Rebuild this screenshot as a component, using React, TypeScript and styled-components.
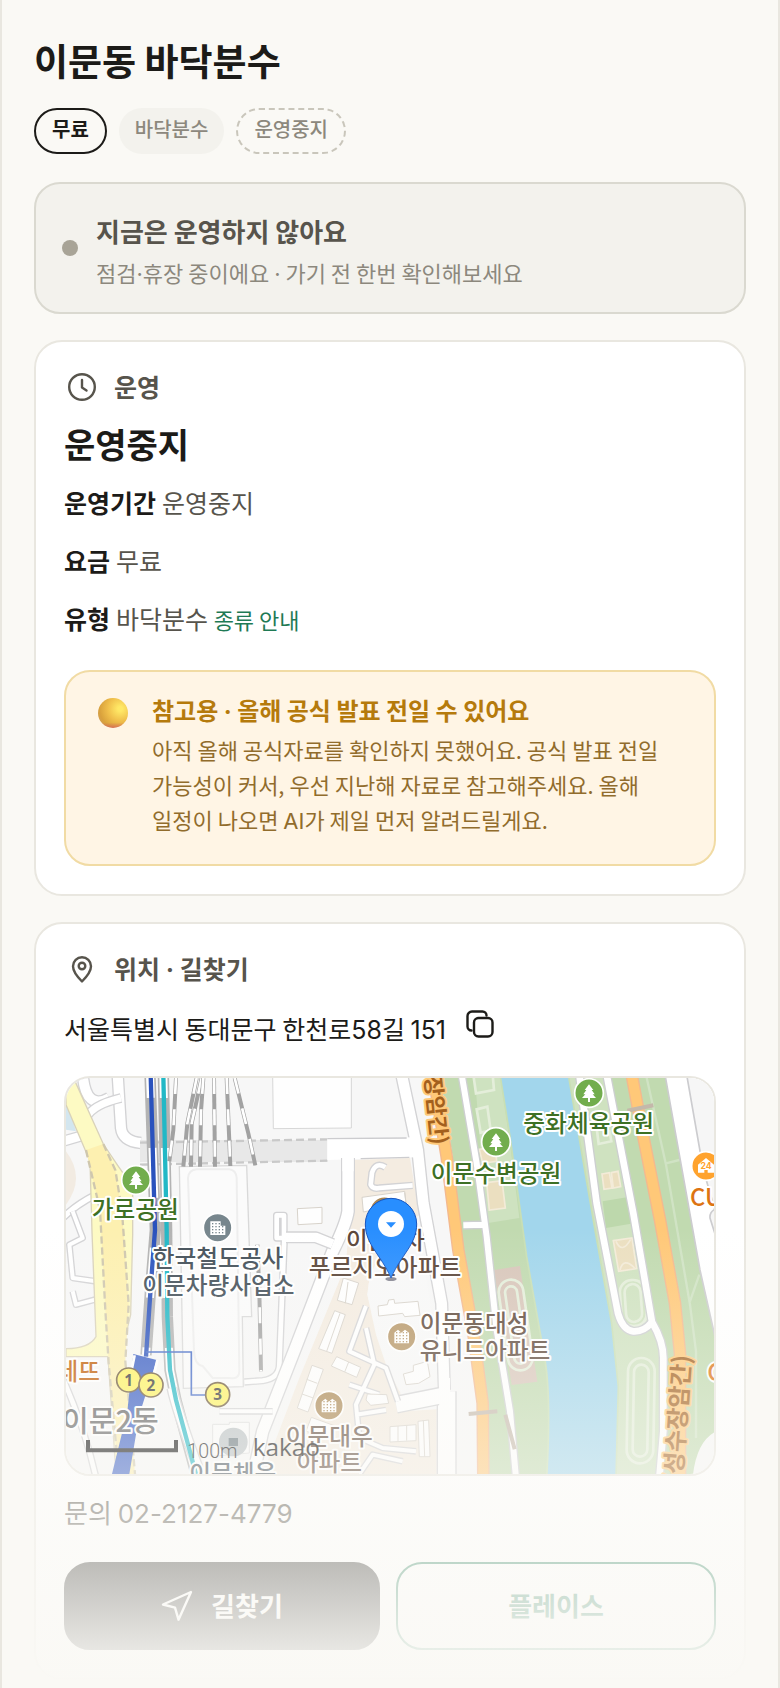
import React from 'react';
import styled, { createGlobalStyle, css } from 'styled-components';

const color = {
  page: '#faf9f5',
  card: '#ffffff',
  ink: '#1c1b18',
  soft: '#57544c',
  muted: '#8c887d',
  line: '#e9e7e0',
  fill: '#f3f2ed',
  green: '#1f7a55',
};

const GlobalStyle = createGlobalStyle`
  *, *::before, *::after { box-sizing: border-box; }
  body {
    margin: 0;
    background: ${color.page};
    color: ${color.ink};
    font-family: "Noto Sans CJK KR", Inter, sans-serif;
    word-break: keep-all;
  }
  h1, h2, p, dl, dd { margin: 0; }
  button { font: inherit; cursor: pointer; }
`;

const Page = styled.main`
  position: relative;
  min-height: 100vh;
  padding: 32px 32px 8px;
  border: solid ${color.line};
  border-width: 0 2px;
  overflow: hidden;
`;

const Latin = styled.span`
  font-family: Inter, sans-serif;
  line-height: 1;
`;

const PageTitle = styled.h1`
  font-size: 37px;
  font-weight: 700;
  line-height: 56px;
`;

const Chips = styled.ul`
  display: flex;
  gap: 12px;
  margin: 20px 0 28px;
  padding: 0;
  list-style: none;
`;

type ChipKind = 'outline' | 'filled' | 'dashed';

const chipLook = {
  outline: css`
    padding: 4px 16px;
    border: 2px solid ${color.ink};
    color: ${color.ink};
    font-weight: 700;
  `,
  filled: css`
    padding: 6px 16px;
    background: ${color.fill};
    color: ${color.muted};
    font-weight: 500;
  `,
  dashed: css`
    padding: 4px 16px;
    border: 2px dashed #c9c6bb;
    color: ${color.muted};
    font-weight: 500;
  `,
};

const Chip = styled.li<{ $kind: ChipKind }>`
  height: 46px;
  border-radius: 23px;
  font-size: 20px;
  line-height: 30px;
  ${({ $kind }) => chipLook[$kind]}
`;

const Status = styled.section`
  display: flex;
  align-items: center;
  gap: 18px;
  height: 132px;
  margin-bottom: 26px;
  padding: 0 26px;
  border: 2px solid #dad9d0;
  border-radius: 26px;
  background: ${color.fill};
`;

const StatusBody = styled.div`
  padding-top: 6px;
`;

const Dot = styled.span`
  flex: none;
  width: 16px;
  height: 16px;
  border-radius: 50%;
  background: #a8a497;
`;

const StatusTitle = styled.h2`
  color: ${color.soft};
  font-size: 26px;
  font-weight: 700;
  line-height: 42px;
`;

const StatusText = styled.p`
  color: ${color.muted};
  font-size: 22px;
  line-height: 40px;
`;

const Card = styled.section`
  padding: 26px 28px 28px;
  border: 2px solid ${color.line};
  border-radius: 28px;
  background: ${color.card};

  & + & { margin-top: 26px; }
`;

const CardHeader = styled.h2`
  display: flex;
  align-items: center;
  gap: 14px;
  margin-bottom: 18px;
  color: ${color.soft};
  font-size: 25px;
  font-weight: 700;
  line-height: 36px;

  svg { margin: 2px 1px 0; }
`;

const Hours = styled.p`
  font-size: 34px;
  font-weight: 700;
  line-height: 44px;
`;

const Facts = styled.dl`
  display: grid;
  gap: 18px;
  margin: 16px 0 32px;
`;

const Fact = styled.div`
  display: flex;
  align-items: baseline;
  gap: 6px;
  font-size: 25px;
  line-height: 40px;

  dt { font-weight: 700; }
  dd { color: ${color.soft}; }
`;

const TextLink = styled.a`
  color: ${color.green};
  font-size: 22px;
  line-height: 1;
  text-decoration: none;
`;

const Notice = styled.aside`
  display: flex;
  gap: 24px;
  padding: 22px 31px 27px;
  border: 2px solid #f1dba4;
  border-radius: 26px;
  background: #fff5e5;
`;

const Orb = styled.span`
  flex: none;
  width: 30px;
  height: 30px;
  margin: 4px 0 0 1px;
  border-radius: 50%;
  background:
    linear-gradient(transparent 82%, rgba(214, 92, 96, 0.7)),
    radial-gradient(circle at 74% 36%, #ffe866 8%, #f0bf4b 42%, #d9a13c 70%, #c59a72 100%);
`;

const NoticeTitle = styled.h2`
  color: #b57a0c;
  font-size: 24px;
  font-weight: 700;
  line-height: 32px;
`;

const NoticeText = styled.p`
  margin-top: 6px;
  color: #916c2c;
  font-size: 22px;
  line-height: 35px;
`;

const Address = styled.div`
  display: flex;
  align-items: center;
  gap: 16px;
  font-size: 25px;
  line-height: 48px;
`;

const CopyButton = styled.button`
  display: grid;
  place-items: center;
  width: 36px;
  height: 48px;
  padding: 0 0 8px;
  border: 0;
  background: none;
  color: ${color.ink};
`;

const MapFrame = styled.div`
  height: 400px;
  margin-top: 24px;
  border: 2px solid ${color.line};
  border-radius: 26px;
  overflow: hidden;

  svg {
    display: block;
    width: 100%;
    height: 100%;
  }
`;

const Phone = styled.p`
  margin: 16px 0 30px;
  color: ${color.soft};
  font-size: 26px;
  line-height: 40px;
`;

const Actions = styled.div`
  display: grid;
  grid-template-columns: 316fr 320fr;
  gap: 16px;
`;

const ActionButton = styled.button<{ $primary?: boolean }>`
  display: flex;
  align-items: center;
  justify-content: center;
  gap: 18px;
  height: 88px;
  padding: 0 0 4px;
  border: 2px solid ${({ $primary }) => ($primary ? color.ink : color.green)};
  border-radius: 26px;
  background: ${({ $primary }) => ($primary ? color.ink : color.card)};
  color: ${({ $primary }) => ($primary ? '#ffffff' : color.green)};
  font-size: 26px;
  font-weight: 700;

  svg { margin-top: 4px; }
`;

const BottomFade = styled.div`
  position: absolute;
  inset: auto -2px 0;
  height: 460px;
  background: linear-gradient(rgba(250, 249, 245, 0), ${color.page});
  pointer-events: none;
`;

const MapLabel = styled.text<{ $tone: string; $halo?: string; $size?: number; $bold?: boolean }>`
  fill: ${({ $tone }) => $tone};
  stroke: ${({ $halo = '#ffffff' }) => $halo};
  stroke-width: 12px;
  stroke-linejoin: round;
  paint-order: stroke;
  font-family: "Noto Sans CJK KR", sans-serif;
  font-size: ${({ $size = 71 }) => $size}px;
  font-weight: ${({ $bold }) => ($bold ? 700 : 500)};
`;

const stroke = {
  fill: 'none',
  stroke: 'currentColor',
  strokeLinecap: 'round' as const,
  strokeLinejoin: 'round' as const,
};

const ClockIcon = () => (
  <svg width="34" height="34" viewBox="0 0 34 34" strokeWidth="2.4" {...stroke}>
    <circle cx="17" cy="17" r="12.8" />
    <path d="M17 10v7.5l4.5 3" />
  </svg>
);

const PinIcon = () => (
  <svg width="34" height="34" viewBox="0 0 34 34" strokeWidth="2.4" {...stroke}>
    <path d="M17 29.5c-3.2-3.2-9-9-9-15.2a9 9 0 0 1 18 0c0 6.2-5.8 12-9 15.2z" />
    <circle cx="17" cy="14" r="3.3" />
  </svg>
);

const CopyIcon = () => (
  <svg width="28" height="28" viewBox="0 0 28 28" strokeWidth="2.4" {...stroke}>
    <rect x="8" y="8" width="18.5" height="18.5" rx="4.5" />
    <path d="M5.5 20.5A4 4 0 0 1 1.5 16.5V6a4.5 4.5 0 0 1 4.5-4.5h10.5a4 4 0 0 1 4 4" />
  </svg>
);

const SendIcon = () => (
  <svg width="32" height="32" viewBox="0 0 32 32" strokeWidth="2.4" {...stroke}>
    <path d="M30 2 2 14.5l12 3.2 3.5 12z" />
  </svg>
);

const Road = ({ d, width, casing = '#d3d3d5', fill = '#ffffff' }: { d: string; width: number; casing?: string; fill?: string }) => (
  <g fill="none" strokeLinejoin="round">
    <path d={d} stroke={casing} strokeWidth={width + 8} />
    <path d={d} stroke={fill} strokeWidth={width} />
  </g>
);

const ParkMarker = ({ x, y }: { x: number; y: number }) => (
  <g transform={`translate(${x} ${y})`}>
    <circle r="43" fill="#72ad4d" stroke="#ffffff" strokeWidth="5" />
    <path d="M0-26 13-9H8L17 4H11L21 15H3V27H-3V15H-21L-11 4H-17L-8-9H-13z" fill="#ffffff" />
  </g>
);

const windows = [-12, -3, 6, 15].flatMap((y) => [-14, -4, 6, 16].map((x) => ({ x: x - 3, y: y - 2 })));

const BuildingMarker = ({ x, y, fill, office }: { x: number; y: number; fill: string; office?: boolean }) => (
  <g transform={`translate(${x} ${y})`}>
    <circle r="43" fill={fill} stroke="#ffffff" strokeWidth="5" />
    <path d={office ? 'M-22-19H9V-6H23V22H-22z' : 'M-22 20V-12L-11-21-1-12V-12L10-21 22-12V20z'} fill="#ffffff" />
    {windows.filter((w) => !office || w.x < 8 || w.y > -8).map((w) => (
      <rect key={`${w.x},${w.y}`} x={w.x} y={w.y} width="4" height="4" fill={fill} />
    ))}
  </g>
);

const ExitBadge = ({ x, y, n }: { x: number; y: number; n: number }) => (
  <g transform={`translate(${x} ${y})`}>
    <circle r="36" fill="#fef35f" stroke="#6b5636" strokeWidth="5" />
    <text y="17" textAnchor="middle" fontFamily="Noto Sans" fontSize="46" fontWeight="700" fill="#333333">{n}</text>
  </g>
);

const sidings = [
  'M330 0 322 156 310 250', 'M392 0 364 136 352 266', 'M407 0 377 136 375 266', 'M412 0 405 100 402 266',
  'M444 0 447 266', 'M482 0 493 264', 'M506 0 547 166 568 262', 'M574 500 580 640 585 880',
];

const houses = [
  'M832 600 878 615 858 680 814 667z', 'M806 698 838 710 798 826 758 812z', 'M812 836 884 868 872 898 796 864z',
  'M738 862 772 874 726 1002 694 990z', 'M888 358 1016 340 1020 376 940 392 892 402z', 'M694 392 768 388 768 436 696 440z',
  'M936 684 964 680 968 666 984 664 986 676 1056 670 1062 712 1016 716 1010 706 938 714z',
  'M1012 888 1042 880 1042 862 1084 850 1092 896 1058 916 1020 920z', 'M904 948 962 950 968 976 914 982 900 966z',
  'M1056 1030 1088 1026 1092 1136 1060 1136z', 'M972 1046 1050 1040 1050 1088 972 1092z', 'M736 1018 808 1044 794 1080 720 1060z',
  'M846 612 838 676M822 706 782 820M848 852 836 882M1016 344 1020 376M754 916 722 904M742 960 708 948M1072 1026 1076 1136M996 1044V1090M1022 1042V1088',
];

const Map = () => (
  <svg viewBox="0 0 1944 1188" preserveAspectRatio="xMidYMid slice" role="img" aria-label="지도">
    <rect width="1944" height="1188" fill="#f7f7f7" />
    <path d="M0 60 30 160 0 155z" fill="#d3e6ef" />
    <path d="M0 220Q60 300 0 380z" fill="#f2ebe2" />

    <Road d="M50-10Q60 100 130 60" width={30} />
    <Road d="M155-10 165 150Q170 190 225 195" width={30} />
    <Road d="M165 60Q80 80 60 120" width={22} />
    <Road d="M-10 190 60 170" width={26} />
    <Road d="M90 350Q30 380-10 420" width={16} />
    <Road d="M20 400 50 480 10 500 20 600 90 610" width={12} />
    <Road d="M20 640 30 680 90 664" width={12} />
    <Road d="M-10 900Q60 1060 90 1200" width={14} />
    <path d="M0 10 28 12 112 198 155 262 200 326 200 470 194 710 165 830 170 1188H150L126 836H0V812Q70 812 90 776L78 462 72 250 0 80z" fill="#fdfac3" stroke="#d9d2ba" strokeWidth="4" />
    <path d="M60 216 112 198 148 276 168 400 188 680 178 850 207 1188H158L128 856 118 696 102 396z" fill="#fdf0b0" />
    <path d="M60 216 102 396 118 696 128 856 158 1188M112 198 148 276 168 400 188 680 178 850 207 1188" fill="none" stroke="#cfc7ae" strokeWidth="7" strokeDasharray="22 11" />

    <rect x="222" y="186" width="562" height="66" fill="#e8e8e8" />
    <path d="M222 194 784 184M222 260 784 248" stroke="#c9c9c9" strokeWidth="7" strokeDasharray="24 12" />
    <path d="M620-10H856V150L622 152z" fill="#fefefe" stroke="#d7d7d7" strokeWidth="3" />
    <path d="M340 266 542 262 557 716 529 716 532 926 352 931z" fill="#fbfbfb" stroke="#d9d9d9" strokeWidth="4" />
    <path d="M366 300Q368 276 392 274H490Q510 276 512 300L520 880Q520 905 490 900L440 900 410 864Q386 860 384 820z" fill="none" stroke="#eeeeee" strokeWidth="6" />
    <Road d="M730 476H654V412H632V476V480H655L640 860Q640 900 590 908L535 912" width={14} />

    <g fill="none">
      <path d="M252-10 268 456 255 616 240 831M292-10 302 456 304 716 312 876 330 966 390 1188" stroke="#b3b3b3" strokeWidth="34" />
      <path d="M252-10 268 456 255 616 240 831M292-10 302 456 304 716 312 876 330 966 390 1188" stroke="#ffffff" strokeWidth="24" strokeDasharray="150 150" strokeDashoffset="80" />
    </g>
    <Road d="M318 930Q330 990 400 1180" width={26} />
    {sidings.map((d) => (
      <g key={d} fill="none">
        <path d={d} stroke="#a2a2a2" strokeWidth="12" />
        <path d={d} stroke="#ffffff" strokeWidth="8" strokeDasharray="48 46" />
      </g>
    ))}
    <path d="M292-10 302 456 304 716 312 876 330 966 390 1188" fill="none" stroke="#22b8c6" strokeWidth="13" />
    <path d="M254-10 267 456 255 616 240 836" fill="none" stroke="#2a52bd" strokeWidth="13" />
    <path d="M202 828 272 846 220 1010 190 1188H138L184 1000z" fill="#375cc4" />
    <path d="M206 832 190 910M274 846 262 900" stroke="#ffffff" strokeWidth="8" />
    <path d="M240 822H376V951H425" fill="none" stroke="#3f67c6" strokeWidth="5" />

    <path d="M862 246 1032 240 1060 410 960 500 912 590 904 650 930 740 990 890 1016 1000 1112 994V1188H590L700 900 840 560z" fill="#f4ece1" />
    <path d="M912 590 1074 560 1130 900 1000 940 960 860 930 770 904 650z" fill="#f8f8f8" />
    <Road d="M1007-10 1055 216 1072 376 1127 676 1135 936" width={32} />
    <Road d="M1142 940V1200" width={52} />
    <path d="M784 182 1048 178 1052 238 784 246z" fill="#ffffff" />
    <path d="M784 182 1022 180M884 242 1030 238" stroke="#cccccf" strokeWidth="4" />
    <Road d="M846 240V400Q840 440 800 520L692 800 590 1060 560 1200" width={34} />
    <Road d="M460 1000H620" width={12} />
    <path d="M829 230H863V280H829z" fill="#ffffff" />
    <Road d="M660 478H750L800 498" width={28} />
    <Road d="M990 980 1140 950" width={46} />
    <path d="M1119 900H1152V1020H1120z" fill="#ffffff" />
    <Road d="M958 268Q930 250 918 284L914 320Q920 334 940 330L1040 322" width={14} />
    <Road d="M900 684 850 820 960 870 996 970M900 750 925 860 870 980 880 1080 950 1110 1050 1120M850 920 940 950M870 1010 960 996M880 1188 920 1130 1010 1150" width={12} />
    {houses.map((d) => (
      <path key={d} d={d} fill="#fefefe" stroke="#d8d3cb" strokeWidth="3" />
    ))}
    <path d="M440 1039H490V1033H550V1125L440 1135z" fill="#fbfbfb" stroke="#dddddd" strokeWidth="3" />

    <path d="M1122-10H1797L1902 576 1950 790V1060Q1890 1090 1880 1200H1262L1264 976 1222 716 1190 516 1160 236z" fill="#c1dab0" />
    <path d="M1226-10H1302L1330 180 1360 420 1262 436z" fill="#cee2c0" />
    <path d="M1507-10H1620L1758 730 1790 800 1780 1200H1650L1657 926 1637 736z" fill="#cfe2c0" />
    <path d="M1610 370 1692 356 1704 436 1620 450z" fill="#bdd8ac" />
    <path d="M1302-10 1332 176 1382 536 1437 846Q1456 960 1442 1200H1650L1657 926 1637 736 1587 456 1532 136 1507-10z" fill="#a2d6ec" stroke="#c9dfb4" strokeWidth="5" />
    <path d="M1740-10 1800 260 1872 680 1890 820 1890 1080M1800 256 1840 246M1872 670 1900 590" fill="none" stroke="#d0e3c4" strokeWidth="7" />
    <path d="M1284 576 1362 564 1414 911 1337 921z" fill="#d8c6ba" />
    <g fill="none" stroke="#e4eeda" strokeWidth="8">
      <rect x="1312" y="604" width="74" height="274" rx="37" transform="rotate(-8 1349 741)" />
      <rect x="1331" y="624" width="36" height="234" rx="18" transform="rotate(-8 1349 741)" />
      <rect x="1664" y="606" width="76" height="138" rx="36" transform="rotate(-4 1702 675)" />
      <rect x="1678" y="618" width="48" height="114" rx="24" transform="rotate(-4 1702 675)" />
      <rect x="1684" y="840" width="80" height="316" rx="40" transform="rotate(1 1724 998)" />
      <rect x="1702" y="860" width="44" height="276" rx="22" transform="rotate(1 1724 998)" />
      <path d="M1222-10 1230 46 1284 36 1280-10M1232 94 1264 86 1274 158 1244 164zM1592 150 1598 198 1636 190 1630 156" />
    </g>
    <g fill="#ebdfc0" stroke="#f3ebd8" strokeWidth="5">
      <path d="M1262 314 1308 308 1318 390 1270 396zM1240 214 1288 206 1292 250 1250 256zM1608 288 1630 284 1638 330 1614 334zM1636 284 1656 280 1664 326 1642 330z" />
      <path d="M1642 488 1698 480 1712 572 1658 580z" />
      <path d="M1650 490Q1668 530 1694 484M1662 576Q1672 536 1706 570" fill="none" />
    </g>
    <Road d="M1187-10 1232 256 1262 476 1292 756 1332 1000 1350 1200M1192 442 1258 440" width={18} casing="#cdcfd0" />
    <Road d="M1540-10 1592 376 1656 706Q1670 756 1702 760Q1734 762 1758 732L1702 406 1622-10M1758 732Q1792 790 1792 840V1060L1780 1200" width={20} casing="#cdcfd0" />
    <Road d="M1102-10 1142 236 1177 516 1222 766 1250 976 1252 1200" width={30} casing="#f3b98f" fill="#ffc878" />
    <Road d="M1697-10 1732 176 1782 426 1827 676 1842 826 1842 1200" width={30} casing="#f3b98f" fill="#ffc878" />
    <path d="M1684 98 1762 82M1208 1008 1294 1000M1318 1010 1346 1114" stroke="#c4b8aa" strokeWidth="12" />
    <path d="M1797-10 1902 576 1950 790V-10z" fill="#ffffff" />
    <path d="M1797-10 1902 576 1950 790" fill="none" stroke="#cccccf" strokeWidth="5" />
    <path d="M1862-10 1912 276 1954 420V-10z" fill="#f6f6f6" stroke="#cccccf" strokeWidth="5" />
    <path d="M1954 390Q1930 400 1932 420L1954 490z" fill="#f6f6f6" stroke="#cccccf" strokeWidth="5" />

    <MapLabel $tone="#3d7024" x="208" y="421" textAnchor="middle">가로공원</MapLabel>
    <MapLabel $tone="#445059" textAnchor="middle">
      <tspan x="456" y="567">한국철도공사</tspan>
      <tspan x="457" y="647">이문차량사업소</tspan>
    </MapLabel>
    <BuildingMarker x={955} y={399} fill="#a98550" />
    <MapLabel $tone="#5a4538" textAnchor="middle">
      <tspan x="958" y="514">이문2차</tspan>
      <tspan x="957" y="594">푸르지오아파트</tspan>
    </MapLabel>
    <MapLabel $tone="#5f4a3c">
      <tspan x="1061" y="762">이문동대성</tspan>
      <tspan x="1061" y="842">유니드아파트</tspan>
    </MapLabel>
    <MapLabel $tone="#5f4a3c" textAnchor="middle">
      <tspan x="790" y="1102">이문대우</tspan>
      <tspan x="790" y="1180">아파트</tspan>
    </MapLabel>
    <MapLabel $tone="#3d7024" x="1290" y="311" textAnchor="middle">이문수변공원</MapLabel>
    <MapLabel $tone="#3d7024" x="1568" y="162" textAnchor="middle">중화체육공원</MapLabel>
    <MapLabel $tone="#dd7412" x="1872" y="384">CU</MapLabel>
    <MapLabel $tone="#dd7412" x="1924" y="908">CU</MapLabel>
    <MapLabel $tone="#c05a00" x="102" y="906" textAnchor="end">레뜨</MapLabel>
    <MapLabel $tone="#606060" $size={87} x="278" y="1063" textAnchor="end">이문2동</MapLabel>
    <circle cx="502" cy="1092" r="43" fill="#b9c0c3" />
    <rect x="488" y="1080" width="28" height="24" fill="#66757c" />
    <MapLabel $tone="#445059" x="500" y="1211" textAnchor="middle">이문체육</MapLabel>
    <MapLabel $tone="#a3601d" $halo="#ffc878" $size={66} $bold textAnchor="end" transform="translate(1098 202) rotate(84)">성수장암간)</MapLabel>
    <MapLabel $tone="#a3601d" $halo="#ffc878" $size={72} $bold textAnchor="end" transform="translate(1874 832) rotate(-86)">(성수장암간)</MapLabel>

    <ParkMarker x={210} y={306} />
    <ParkMarker x={1290} y={192} />
    <ParkMarker x={1569} y={45} />
    <BuildingMarker x={455} y={449} fill="#77868d" office />
    <BuildingMarker x={1007} y={776} fill="#b79768" />
    <BuildingMarker x={789} y={983} fill="#a98550" />
    <g transform="translate(1920 264)">
      <circle r="43" fill="#ffa32e" stroke="#ffffff" strokeWidth="5" />
      <path d="M0-24 24-4V20H5V12H-5V20H-24V-4z" fill="#ffffff" />
      <text y="10" textAnchor="middle" fontFamily="Inter" fontSize="26" fontWeight="700" fill="#ffa32e">24</text>
    </g>
    <ExitBadge x={188} y={906} n={1} />
    <ExitBadge x={255} y={921} n={2} />
    <ExitBadge x={455} y={950} n={3} />

    <path d="M66 1086V1117H330V1086" fill="none" stroke="#0f0f0f" strokeWidth="12" />
    <text x="364" y="1139" fontFamily="Roboto" fontSize="59" fontWeight="300" fill="#0f0f0f">100m</text>
    <text x="560" y="1134" fontFamily="Open Sans" fontSize="73" fontWeight="500" fill="#0f0f0f">kakao</text>

    <ellipse cx="975" cy="603" rx="17" ry="6" fill="#555566" opacity="0.7" />
    <path d="M975 600C945 530 898 500 898 438a77 77 0 0 1 154 0C1052 500 1005 530 975 600z" fill="#288eff" stroke="#1655c0" strokeWidth="3" />
    <circle cx="975" cy="438" r="39" fill="#ffffff" />
    <path d="M960 433H990L975 449z" fill="#288eff" />
  </svg>
);

const chips: { label: string; kind: ChipKind }[] = [
  { label: '무료', kind: 'outline' },
  { label: '바닥분수', kind: 'filled' },
  { label: '운영중지', kind: 'dashed' },
];

export default function App() {
  return (
    <>
      <GlobalStyle />
      <Page>
        <PageTitle>이문동 바닥분수</PageTitle>
        <Chips>
          {chips.map(({ label, kind }) => (
            <Chip key={label} $kind={kind}>{label}</Chip>
          ))}
        </Chips>

        <Status>
          <Dot />
          <StatusBody>
            <StatusTitle>지금은 운영하지 않아요</StatusTitle>
            <StatusText>점검<Latin>·</Latin>휴장 중이에요 <Latin>·</Latin> 가기 전 한번 확인해보세요</StatusText>
          </StatusBody>
        </Status>

        <Card>
          <CardHeader><ClockIcon />운영</CardHeader>
          <Hours>운영중지</Hours>
          <Facts>
            <Fact><dt>운영기간</dt><dd>운영중지</dd></Fact>
            <Fact><dt>요금</dt><dd>무료</dd></Fact>
            <Fact><dt>유형</dt><dd>바닥분수 <TextLink href="#types">종류 안내</TextLink></dd></Fact>
          </Facts>
          <Notice>
            <Orb />
            <div>
              <NoticeTitle>참고용 <Latin>·</Latin> 올해 공식 발표 전일 수 있어요</NoticeTitle>
              <NoticeText>
                아직 올해 공식자료를 확인하지 못했어요. 공식 발표 전일 가능성이 커서, 우선 지난해 자료로 참고해주세요. 올해 일정이 나오면 <Latin>AI</Latin>가 제일 먼저 알려드릴게요.
              </NoticeText>
            </div>
          </Notice>
        </Card>

        <Card>
          <CardHeader><PinIcon /><span>위치 <Latin>·</Latin> 길찾기</span></CardHeader>
          <Address>
            <span>서울특별시 동대문구 한천로<Latin>58</Latin>길 <Latin>151</Latin></span>
            <CopyButton type="button" aria-label="주소 복사"><CopyIcon /></CopyButton>
          </Address>
          <MapFrame><Map /></MapFrame>
          <Phone>문의 <Latin>02-2127-4779</Latin></Phone>
          <Actions>
            <ActionButton type="button" $primary><SendIcon />길찾기</ActionButton>
            <ActionButton type="button">플레이스</ActionButton>
          </Actions>
        </Card>
        <BottomFade />
      </Page>
    </>
  );
}
